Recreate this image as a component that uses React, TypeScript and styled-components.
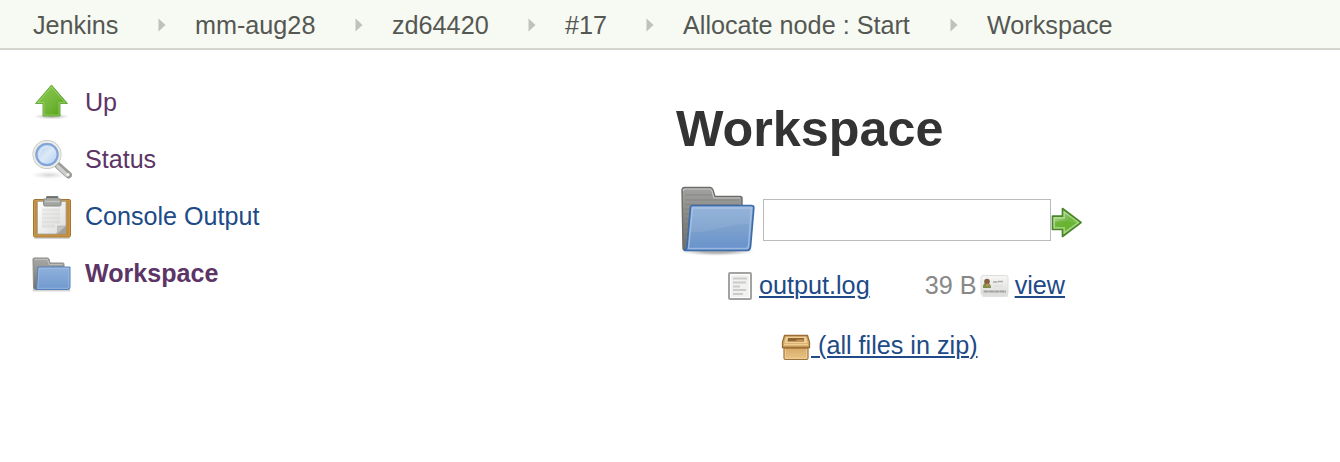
import React from "react";
import styled, { createGlobalStyle } from "styled-components";

const GlobalStyle = createGlobalStyle`
  * { box-sizing: border-box; }
  body {
    margin: 0;
    background: #fff;
    color: #333;
    font-family: "Liberation Sans", Helvetica, Arial, sans-serif;
    font-size: 25.2px;
    line-height: 30px;
  }
`;

const Breadcrumbs = styled.nav`
  display: flex;
  align-items: center;
  height: 50px;
  padding: 2px 0 0 33px;
  background: #f6faf2;
  border-bottom: 2px solid #d3d7cf;
  white-space: nowrap;
`;

const Crumb = styled.a<{ $width: number }>`
  flex: none;
  width: ${(p) => p.$width}px;
  color: #555753;
`;

const Separator = styled.svg`
  flex: none;
  width: 8px;
  height: 14px;
  margin: 0 29px 0 0;
`;

const Page = styled.div`
  display: flex;
`;

const SidePanel = styled.aside`
  display: flex;
  flex-direction: column;
  width: 676px;
  padding: 31px 0 0 31px;
`;

const Task = styled.a<{ $height: number; $visited?: boolean; $active?: boolean }>`
  display: flex;
  align-items: center;
  gap: 13px;
  height: ${(p) => p.$height}px;
  color: ${(p) => (p.$visited ? "#5c3566" : "#204a87")};
  font-weight: ${(p) => (p.$active ? 700 : 400)};

  svg { flex: none; }
`;

const TaskLabel = styled.span<{ $lift: number }>`
  font-size: 25.1px;
  padding-bottom: ${(p) => p.$lift}px;
`;

const MainPanel = styled.main`
  display: flex;
  flex-direction: column;
  align-items: flex-start;
`;

const Heading = styled.h1`
  margin: 49px 0 0;
  font-size: 50.3px;
  line-height: 60px;
  font-weight: 700;
  color: #333;
`;

const PathForm = styled.form`
  display: flex;
  align-items: flex-start;
  height: 82px;
  margin-top: 23px;
  padding-left: 3px;

  > svg { margin-top: 4px; }
`;

const PathInput = styled.input`
  width: 288px;
  height: 42px;
  margin: 17px 0 0 6px;
  padding: 0 6px;
  border: 1px solid #bbb;
  border-radius: 0;
  background: #fff;
  font: inherit;
`;

const GoButton = styled.button`
  display: flex;
  margin: 25px 0 0;
  padding: 0;
  border: 0;
  background: none;
`;

const FileRow = styled.div`
  display: flex;
  align-items: center;
  height: 34px;
  padding-left: 51px;
  margin-top: 5px;
`;

const FileLink = styled.a<{ $gap: number }>`
  margin-left: ${(p) => p.$gap}px;
  padding-bottom: 2px;
  color: #204a87;
  text-decoration: underline;
  text-decoration-thickness: 2px;
  text-underline-offset: 2px;
  white-space: pre;
`;

const FileSize = styled.span`
  width: 55px;
  margin-left: 55px;
  padding-bottom: 2px;
  color: #888;
`;

const ZipRow = styled.div`
  display: flex;
  align-items: center;
  height: 34px;
  margin-top: 26px;
  padding-left: 105px;

  svg { margin-top: 2px; }
`;

const ArrowSeparator = () => (
  <Separator viewBox="0 0 8 14">
    <path d="M.5 .5 7.5 7 .5 13.5z" fill="#bfc1be" />
  </Separator>
);

const UpIcon = () => (
  <svg width="41" height="40" viewBox="0 0 41 40">
    <defs>
      <linearGradient id="up" x1="0" y1="0" x2="1" y2="1">
        <stop offset="0" stopColor="#8fce50" />
        <stop offset=".55" stopColor="#73b63a" />
        <stop offset="1" stopColor="#4fa00b" />
      </linearGradient>
      <radialGradient id="upShade">
        <stop offset="0" stopColor="#555" stopOpacity=".5" />
        <stop offset="1" stopColor="#777" stopOpacity="0" />
      </radialGradient>
    </defs>
    <ellipse cx="20.500" cy="33.500" rx="18" ry="3" fill="url(#upShade)" />
    <path d="M20.500 2 36.500 20.500H29V33H12V20.500H4.500z" fill="url(#up)" stroke="#69aa42" strokeWidth="1" />
    <path d="M20.500 4 34 19.500H28V32H13V19.500H7z" fill="none" stroke="#b6e58c" strokeOpacity=".45" />
  </svg>
);

const SearchIcon = () => (
  <svg width="41" height="40" viewBox="0 0 41 40">
    <defs>
      <linearGradient id="lens" x1="0" y1="0" x2="1" y2="1">
        <stop offset="0" stopColor="#a3c3ea" />
        <stop offset=".5" stopColor="#dce9f8" />
        <stop offset="1" stopColor="#a9c9f0" />
      </linearGradient>
      <radialGradient id="lensShade">
        <stop offset="0" stopColor="#555" stopOpacity=".25" />
        <stop offset="1" stopColor="#888" stopOpacity="0" />
      </radialGradient>
    </defs>
    <ellipse cx="18" cy="35" rx="18" ry="4" fill="url(#lensShade)" />
    <path d="M27 25.500 37.500 35" stroke="#9b9d99" strokeWidth="7" strokeLinecap="round" />
    <path d="M27 26.500 36 35" stroke="#cfd0cd" strokeWidth="3.500" strokeLinecap="round" />
    <circle cx="37" cy="34.500" r="1.500" fill="#f4f4f3" />
    <circle cx="16" cy="14.500" r="12.500" fill="url(#lens)" stroke="#c0c2bd" strokeWidth="4" />
    <circle cx="16" cy="14.500" r="12.800" fill="none" stroke="#ecedea" strokeWidth="2" />
    <circle cx="16" cy="14.500" r="10.600" fill="none" stroke="#7fa5da" strokeWidth="2" />
    <path d="M8.500 15c0-5 3-8.500 8-8.500" fill="none" stroke="#f2f7fd" strokeWidth="1.500" opacity=".5" />
  </svg>
);

const ClipboardIcon = () => (
  <svg width="41" height="45" viewBox="0 0 41 45">
    <defs>
      <linearGradient id="sheet" x1="0" y1="0" x2="1" y2="1">
        <stop offset="0" stopColor="#fff" />
        <stop offset="1" stopColor="#dcdcda" />
      </linearGradient>
    </defs>
    <rect x="3" y="41" width="36" height="3" rx="1.500" fill="#777" opacity=".3" />
    <rect x="2.500" y="4.500" width="37" height="37.500" rx="1.500" fill="#c18b3b" stroke="#a2742f" />
    <rect x="3.500" y="5.500" width="35" height="35.500" fill="none" stroke="#d6a55b" strokeOpacity=".5" />
    <path d="M6.500 6.500H35V31L27 39H6.500z" fill="url(#sheet)" stroke="#a5a6a2" strokeWidth=".8" />
    <path d="M35 31V39H25c2-1 2-4 2-8z" fill="#a0a19d" />
    <path d="M26.500 31H35L26 39c1-3 1-5 .5-8z" fill="#c3c4c1" stroke="#a9aaa6" strokeWidth=".6" />
    <path d="M11 15H29M11 19H29M11 23H29M11 27H29M11 31H24" stroke="#ccc" strokeWidth="3" opacity=".4" />
    <path d="M12.500 4H15.500V1.500H27V4H30V9.500Q30 11 28.500 11H14Q12.500 11 12.500 9.500z" fill="#a3a5a0" stroke="#8a8c87" />
    <path d="M14 6.500H28.500" stroke="#c3c6c0" strokeWidth="1.500" />
    <path d="M16 2.200H26.500" stroke="#6a6c68" strokeWidth="1.500" />
  </svg>
);

const FolderIcon = () => (
  <svg width="78" height="70" viewBox="0 0 78 70">
    <defs>
      <linearGradient id="folderFront" x1="0" y1="0" x2="0" y2="1">
        <stop offset="0" stopColor="#8eafd7" />
        <stop offset=".5" stopColor="#7da1ce" />
        <stop offset="1" stopColor="#6692cb" />
      </linearGradient>
      <linearGradient id="folderBack" x1="0" y1="0" x2="0" y2="1">
        <stop offset="0" stopColor="#a1a19f" />
        <stop offset="1" stopColor="#6e6e6c" />
      </linearGradient>
      <radialGradient id="folderShade">
        <stop offset=".4" stopColor="#444" stopOpacity=".42" />
        <stop offset="1" stopColor="#888" stopOpacity="0" />
      </radialGradient>
    </defs>
    <ellipse cx="38" cy="65" rx="38" ry="5" fill="url(#folderShade)" />
    <path d="M3 4Q3 1.500 5.500 1.500H31Q33 1.500 34 4L36 10.500H61Q63 10.500 63 12.500V22L56 64H6Q4 64 4 62z" fill="url(#folderBack)" stroke="#6b6b69" strokeWidth="1.400" />
    <path d="M4.500 5Q4.500 3 6.500 3H31Q32 3 33 5L35 12H61" fill="none" stroke="#c6c6c4" strokeWidth="1.200" />
    <path d="M6 9H33M6 14H60M6 18.500H60M6 23H12M6 28H12M6 33H11M6 38H11M6 43H10M6 48H10M6 53H9" stroke="#656563" strokeOpacity=".35" strokeWidth="1.200" />
    <path d="M11.500 21Q12 19.500 14 19.500H72.500Q75 19.500 74.800 22L71.500 61Q71 64.500 68.500 64.500H5Q7.500 63.500 8 61z" fill="url(#folderFront)" stroke="#3f6dab" strokeWidth="1.700" />
    <path d="M13.500 22H72.500L69.500 60Q69 62.500 67 62.500H9.500z" fill="none" stroke="#c2d6ee" strokeOpacity=".55" strokeWidth="1.500" />
    <path d="M14 23H72L70.500 38C46 38 34 47 12 46z" fill="#fff" opacity=".07" />
  </svg>
);

const SmallFolderIcon = () => (
  <svg width="41" height="37" viewBox="0 0 41 37">
    <defs>
      <linearGradient id="smallFront" x1="0" y1="0" x2="0" y2="1">
        <stop offset="0" stopColor="#8fb1db" />
        <stop offset="1" stopColor="#7199cf" />
      </linearGradient>
      <linearGradient id="smallBack" x1="0" y1="0" x2="0" y2="1">
        <stop offset="0" stopColor="#a8a8a6" />
        <stop offset="1" stopColor="#737371" />
      </linearGradient>
    </defs>
    <rect x="1.500" y="32.500" width="38" height="3" rx="1.500" fill="#777" opacity=".3" />
    <path d="M2 3Q2 2 3 2H16.500Q17.500 2 18 3L19 7H32Q33 7 33 8V12L29 33H3.500Q2.500 33 2.500 32z" fill="url(#smallBack)" stroke="#8b8b89" />
    <path d="M3.500 3.500H16.500L18 8.500H31.500" fill="none" stroke="#c6c6c4" strokeOpacity=".8" />
    <path d="M7 11H39V31Q39 33.500 37 33.500H4Q5.500 33 5.800 31z" fill="url(#smallFront)" stroke="#557fb8" />
    <path d="M8 12.200H37.800V31Q37.500 32.300 36.500 32.300H6.800z" fill="none" stroke="#b3cbea" strokeOpacity=".5" />
  </svg>
);

const GoIcon = () => (
  <svg width="32" height="32" viewBox="0 0 32 32">
    <defs>
      <linearGradient id="go" x1="0" y1="0" x2="1" y2="1">
        <stop offset="0" stopColor="#c3deae" />
        <stop offset=".5" stopColor="#6fb540" />
        <stop offset="1" stopColor="#9ad56c" />
      </linearGradient>
    </defs>
    <path d="M1.500 9.200H11.500V1.500L30 15.500 11.500 29.500V22.500H1.500z" fill="url(#go)" stroke="#4a8629" strokeWidth="1.700" strokeLinejoin="round" />
    <path d="M3.200 11H13.200V5L27.500 15.500 13.200 26V20.800H3.200z" fill="none" stroke="#c7e7ae" strokeOpacity=".65" strokeWidth="1.300" />
    <path d="M4 15Q14 13 18 15L26 15.500 14 24V20H4z" fill="#64b22a" opacity=".7" />
  </svg>
);

const DocumentIcon = () => (
  <svg width="26" height="30" viewBox="0 0 26 30">
    <rect x="2" y="2" width="22" height="26" rx="1" fill="#f1f1f0" stroke="#a2a3a0" strokeWidth="2" />
    <rect x="3.500" y="3.500" width="19" height="23" fill="none" stroke="#fff" />
    <path d="M6 7.500H20M6 11.500H19M6 15.500H13M6 19H19M6 23H16" stroke="#cbcbca" strokeWidth="1.800" />
  </svg>
);

const CardIcon = () => (
  <svg width="30" height="24" viewBox="0 0 30 24">
    <defs>
      <linearGradient id="card" x1="0" y1="0" x2="0" y2="1">
        <stop offset="0" stopColor="#f7f7f6" />
        <stop offset="1" stopColor="#dcdcdb" />
      </linearGradient>
    </defs>
    <rect x="2" y="20" width="26" height="3" rx="1.500" fill="#777" opacity=".22" />
    <rect x="1" y="1.500" width="27" height="19.500" rx="2" fill="url(#card)" stroke="#dededd" />
    <path d="M3 14Q2.500 9 6.500 8.500Q11 9 11 14z" fill="#7c8d4b" />
    <circle cx="7" cy="7.500" r="2.800" fill="#83603f" />
    <circle cx="7.500" cy="11" r="1.500" fill="#c68f4d" />
    <path d="M13 8H17.500M18 7.500H23" stroke="#aaa" strokeWidth="1.500" />
    <path d="M14 12H23" stroke="#dadad9" />
    <path d="M3.500 17.500H26" stroke="#a2a2a1" strokeWidth="1.800" strokeDasharray="5 .4" />
  </svg>
);

const PackageIcon = () => (
  <svg width="30" height="27" viewBox="0 0 30 27">
    <defs>
      <linearGradient id="box" x1="0" y1="0" x2="0" y2="1">
        <stop offset="0" stopColor="#d2a764" />
        <stop offset="1" stopColor="#e9c384" />
      </linearGradient>
    </defs>
    <path d="M3 12H27V24Q27 25.500 25.500 25.500H4.500Q3 25.500 3 24z" fill="url(#box)" stroke="#9c713a" strokeWidth="1.200" />
    <path d="M4.300 15V24.200H25.700V15" fill="none" stroke="#f1d5a5" strokeOpacity=".8" />
    <path d="M3.500 1.500H26.500L28.500 8V13.500H1.500V8z" fill="#d6aa65" stroke="#9a6e35" strokeWidth="1.300" />
    <path d="M5 2.700H25L26.500 9H3.500z" fill="#edcf9c" />
    <path d="M7 4H23V7.500H6.500z" fill="#8f642d" />
    <path d="M13 7.500 17 5.500H22.500V7.500z" fill="#c39554" />
    <path d="M3 10.500H27" stroke="#efcf97" strokeWidth="1.500" />
    <path d="M4 14.500H26" stroke="#a27335" strokeOpacity=".6" />
  </svg>
);

const crumbs = [
  { label: "Jenkins", width: 125 },
  { label: "mm-aug28", width: 160 },
  { label: "zd64420", width: 136 },
  { label: "#17", width: 81 },
  { label: "Allocate node : Start", width: 267 },
  { label: "Workspace", width: 140 },
];

export default function App() {
  return (
    <>
      <GlobalStyle />
      <Breadcrumbs>
        {crumbs.map((crumb, i) => (
          <React.Fragment key={crumb.label}>
            <Crumb $width={crumb.width}>{crumb.label}</Crumb>
            {i < crumbs.length - 1 && <ArrowSeparator />}
          </React.Fragment>
        ))}
      </Breadcrumbs>
      <Page>
        <SidePanel>
          <Task $height={44} $visited>
            <UpIcon />
            <TaskLabel $lift={2}>Up</TaskLabel>
          </Task>
          <Task $height={70} $visited>
            <SearchIcon />
            <TaskLabel $lift={2}>Status</TaskLabel>
          </Task>
          <Task $height={45}>
            <ClipboardIcon />
            <TaskLabel $lift={4}>Console Output</TaskLabel>
          </Task>
          <Task $height={68} $visited $active>
            <SmallFolderIcon />
            <TaskLabel $lift={2}>Workspace</TaskLabel>
          </Task>
        </SidePanel>
        <MainPanel>
          <Heading>Workspace</Heading>
          <PathForm>
            <FolderIcon />
            <PathInput aria-label="Path" />
            <GoButton type="button" aria-label="Go"><GoIcon /></GoButton>
          </PathForm>
          <FileRow>
            <DocumentIcon />
            <FileLink $gap={6}>output.log</FileLink>
            <FileSize>39 B</FileSize>
            <CardIcon />
            <FileLink $gap={5}>view</FileLink>
          </FileRow>
          <ZipRow>
            <PackageIcon />
            <FileLink $gap={0}> (all files in zip)</FileLink>
          </ZipRow>
        </MainPanel>
      </Page>
    </>
  );
}
